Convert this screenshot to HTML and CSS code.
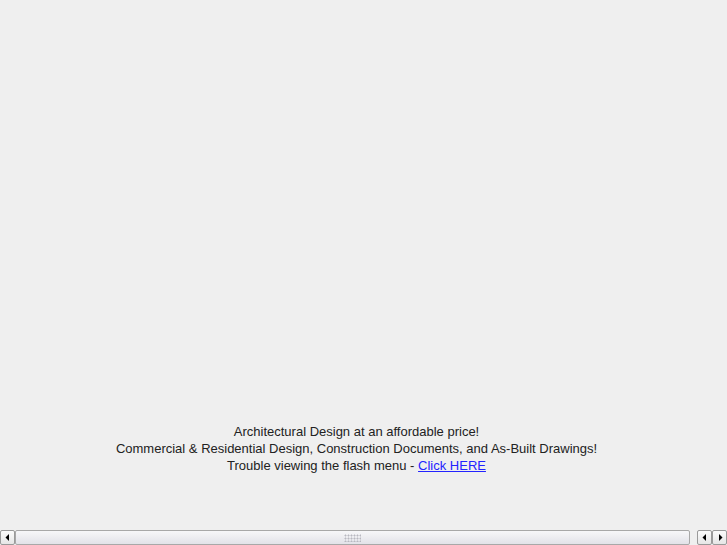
FILE: index.html
```html
<!DOCTYPE html>
<html>
<head>
<meta charset="utf-8">
<link rel="stylesheet" href="styles.css">
</head>
<body>
<div class="page">
  <div class="flash"></div>
  <div class="tagline">
    <p>Architectural Design at an affordable price!</p>
    <p>Commercial &amp; Residential Design, Construction Documents, and As-Built Drawings!</p>
    <p>Trouble viewing the flash menu - <a class="link" href="menu.html">Click HERE</a></p>
  </div>
  <div class="hscroll">
    <div class="btn"><svg width="6" height="7" viewBox="0 0 6 7"><path d="M4 0 L4 7 L0.5 3.5 Z" fill="#000"/></svg></div>
    <div class="track">
      <div class="thumb"><div class="grip"></div></div>
    </div>
    <div class="btn"><svg width="6" height="7" viewBox="0 0 6 7"><path d="M4 0 L4 7 L0.5 3.5 Z" fill="#000"/></svg></div>
    <div class="btn"><svg width="6" height="7" viewBox="0 0 6 7"><path d="M2 0 L2 7 L5.5 3.5 Z" fill="#000"/></svg></div>
  </div>
</div>
</body>
</html>
```
FILE: styles.css
```css
html, body {
  margin: 0;
  padding: 0;
  background: #efefef;
}
.page {
  height: 545px;
  display: flex;
  flex-direction: column;
  font-family: "Liberation Sans", Arial, sans-serif;
  font-size: 13px;
  color: #222;
}
.flash {
  height: 423px;
  flex: none;
}
.tagline {
  padding: 0 14px 0 0;
  text-align: center;
}
.tagline p {
  margin: 0;
  line-height: 17px;
}
.link,
.link:link,
.link:visited {
  color: #2323ff;
}
.hscroll {
  margin-top: auto;
  height: 15px;
  display: flex;
  align-items: stretch;
  background: #efefef;
}
.btn {
  width: 13px;
  height: 13px;
  border: 1px solid #9a9a9a;
  border-radius: 2px;
  background: linear-gradient(#fbfbfb, #e6e6e6);
  display: flex;
  align-items: center;
  justify-content: center;
  flex: none;
}
.track {
  flex: 1;
  display: flex;
  padding: 0 7px 0 0;
}
.thumb {
  flex: 1;
  border: 1px solid #a8a8a8;
  border-radius: 2px;
  background: linear-gradient(#f7f7f9, #e2e2e8);
  display: flex;
  align-items: center;
  justify-content: center;
}
.grip {
  width: 17px;
  height: 8px;
  background-image: radial-gradient(circle, #b8b8c0 0.9px, transparent 1.1px);
  background-size: 3px 3px;
}
```
